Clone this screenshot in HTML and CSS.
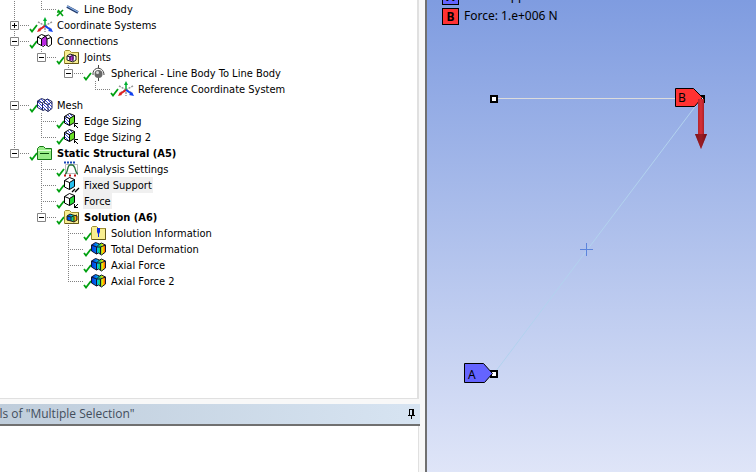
FILE: index.html
```
<!DOCTYPE html>
<html lang="en">
<head>
<meta charset="utf-8">
<title>Mechanical outline</title>
<link rel="stylesheet" href="styles.css">
</head>
<body>
<svg class="defs" aria-hidden="true">
  <defs>
    <linearGradient id="rainbow" x1="0" x2="1" y1="0" y2="0"><stop offset="0" stop-color="#0030e0"/><stop offset=".3" stop-color="#0070f0"/><stop offset=".45" stop-color="#00c8e8"/><stop offset=".6" stop-color="#20d840"/><stop offset=".8" stop-color="#ffe000"/><stop offset="1" stop-color="#ff3000"/></linearGradient>
    <pattern id="hatch" width="3" height="3" patternUnits="userSpaceOnUse"><path d="M0 0h1v1h-1zM1 1h1v1h-1zM2 2h1v1h-1z" fill="#3848e0"/></pattern>
    <symbol id="check" viewBox="0 0 9 9"><path d="M1 5l2 2.500L8 1" fill="none" stroke="#00a010" stroke-width="1.800"/></symbol>
    <symbol id="partial" viewBox="0 0 9 9"><path d="M1 8l6-6M2 2l5 6M1 4h2" fill="none" stroke="#00a010" stroke-width="1.600"/></symbol>
    <symbol id="minus" viewBox="0 0 9 9"><path d="M.5.5h8v8h-8z" fill="#fff" stroke="#848484"/><path d="M2 4.500h5" stroke="#000"/></symbol>
    <symbol id="plus" viewBox="0 0 9 9"><path d="M.5.5h8v8h-8z" fill="#fff" stroke="#848484"/><path d="M2 4.500h5M4.500 2v5" stroke="#000"/></symbol>
    <symbol id="i-line" viewBox="0 0 18 16"><path d="M4 5.500l11 6" stroke="#203868" stroke-width="2.600"/><path d="M4 5l11 6" stroke="#88b0e8" stroke-width="1.400"/></symbol>
    <symbol id="i-axes" viewBox="0 0 18 16"><path d="M2 5l13 7M16 5L3 12M9 8v7" stroke="#999" stroke-width="1.500" stroke-dasharray="2 1"/><path d="M9 9V2" stroke="#00b030" stroke-width="1.500"/><path d="M7 4l2-4 2 4z" fill="#00b030"/><path d="M9 9l-6 4" stroke="#e02020" stroke-width="2"/><path d="M9 9l6 4" stroke="#1040f0" stroke-width="2"/><path d="M1 15l2-4 2 3z" fill="#e02020"/><path d="M17 15l-5-1 3-3z" fill="#1040f0"/></symbol>
    <symbol id="i-conn" viewBox="0 0 18 16"><path d="M1.500 4l4-2.500 4 1.500 3-1 3 2.500v7l-3 2-3-2-2 2-6-3z" fill="#fff" stroke="#000"/><path d="M5 6l5-3 1 2v8l-2-1-3 1z" fill="#b828e0"/><path d="M1.500 4l4 2v7M5.500 6l4-3M11 6l4-1.500M11 6v7M11 6L9.500 3" fill="none" stroke="#000"/></symbol>
    <symbol id="folder" viewBox="0 0 18 16"><path d="M1.500 14.500v-12l1-1h4l2 2h7v11z" fill="#f8ee90" stroke="#a09030"/><path d="M2 14.500h13.500v-11" fill="none" stroke="#655818"/></symbol>
    <symbol id="i-joints" viewBox="0 0 18 16"><use href="#folder" width="18" height="16"/><path d="M4 7l3-2 3 1 3 1v4l-3 2-3-1-3-1z" fill="#fff" stroke="#222"/><path d="M6 7l4-1 1 3-1 3-4-1z" fill="#b828e0"/><path d="M4 7l3 1 3-2 3 1M7 8v4M10 7v5" fill="none" stroke="#222"/></symbol>
    <symbol id="i-sphere" viewBox="0 0 18 16"><path d="M3 10C2 1 14 1 14 10M8.500 0v3M8.500 13v3" fill="none" stroke="#444"/><circle cx="8.500" cy="9" r="4" fill="#686868"/><circle cx="7.500" cy="7.500" r="1.500" fill="#ddd"/></symbol>
    <symbol id="i-mesh" viewBox="0 0 18 16"><path d="M1.500 4l4-2.500 4 1.500 2-1 4.500 2.500v7l-4 3-3-2-2 1-5.500-3z" fill="#fff"/><path d="M1.500 4l4-2.500 4 1.500 2-1 4.500 2.500v7l-4 3-3-2-2 1-5.500-3z" fill="url(#hatch)" stroke="#20265c"/><path d="M1.500 4l5 2v7M6.500 6l3-3M8 6l4 1.500v7M12 7.500l4-3M9.500 3L8 6" fill="none" stroke="#20265c"/></symbol>
    <symbol id="i-edge" viewBox="0 0 18 16"><path d="M1.500 3.500l5-3 5 2v7l-5 3-5-2.500z" fill="#fff"/><path d="M1.500 3.500l5-3 5 2-5 3v7l-5-2.500z" fill="url(#hatch)"/><path d="M6.500 5.500l5-3v7l-5 3z" fill="#68e028"/><path d="M1.500 3.500l5-3 5 2v7l-5 3-5-2.500zl5 2 5-3M6.500 5.500v7" fill="none" stroke="#000"/><path d="M11 11l4 4M11.500 14v-3.500h3.500" fill="none" stroke="#000"/></symbol>
    <symbol id="i-static" viewBox="0 0 18 16"><path d="M1.500 14.500v-11l2-2h4l2 2h6v11z" fill="#98ec88" stroke="#167816"/><path d="M2 5.500h13" stroke="#dcffd4"/><path d="M4 8.500h9" stroke="#064806"/></symbol>
    <symbol id="i-analysis" viewBox="0 0 18 16"><path d="M2.500 3.500h12v9h-12z" fill="#fff" stroke="#bbb"/><path d="M2 13c3 0 2-9 5-9h2c4 0 3 9 6 9" fill="none" stroke="#28733c" stroke-width="1.300"/><path d="M1 1.500h12" stroke="#1848b8" stroke-width="2" stroke-dasharray="2 1"/><path d="M1 14.500h15" stroke="#c01818" stroke-width="2" stroke-dasharray="2 3"/></symbol>
    <symbol id="i-fixed" viewBox="0 0 18 16"><path d="M1.500 3.500l5-3 5 2v7l-5 3-5-2.500z" fill="#fff"/><path d="M6.500 5.500l5-3v7l-5 3z" fill="#28c0f0"/><path d="M1.500 3.500l5-3 5 2v7l-5 3-5-2.500zl5 2 5-3M6.500 5.500v7" fill="none" stroke="#000"/><path d="M9 15l3-3M12 15l4-4" stroke="#000" stroke-width="1.300"/></symbol>
    <symbol id="i-force" viewBox="0 0 18 16"><path d="M1.500 3.500l5-3 5 2v7l-5 3-5-2.500z" fill="#fff"/><path d="M6.500 5.500l5-3v7l-5 3z" fill="#28d838"/><path d="M1.500 3.500l5-3 5 2v7l-5 3-5-2.500zl5 2 5-3M6.500 5.500v7" fill="none" stroke="#000"/><path d="M15 11l-4 4M11.500 11v3.500h3.500" fill="none" stroke="#000"/></symbol>
    <symbol id="i-result" viewBox="0 0 18 16"><path d="M1.500 4l4-2.500 4 1.500 2-1 4 2v7l-4 3-3-2-2 1-5-3z" fill="url(#rainbow)" stroke="#101830"/><path d="M1.500 4l5 2v7M6.500 6l3-3M10.500 6l5-2M10.500 6v7M6.500 6l4 0" fill="none" stroke="#101830"/></symbol>
    <symbol id="i-solution" viewBox="0 0 18 16"><use href="#folder" width="18" height="16"/><path d="M4 7l3-2 3 1 4 1v4l-3 2-3-1-4-1z" fill="url(#rainbow)" stroke="#222"/><path d="M4 7l4 1 3-1 3-1M8 8v4M11 8v5" fill="none" stroke="#222"/></symbol>
    <symbol id="i-info" viewBox="0 0 18 16"><use href="#folder" width="18" height="16"/><path d="M7 3h3v4l-1 2H8L7 7z" fill="#0828e0"/><path d="M8.500 9v3" stroke="#0828e0"/></symbol>
  </defs>
</svg>
<main class="app">
  <section class="side">
    <div class="outline">
      <ul class="tree" id="tree" role="tree" aria-label="Outline"></ul>
    </div>
    <div class="details">
      <header class="details-bar">
        <h2 class="details-title">Details of "Multiple Selection"</h2>
        <button class="pin" aria-label="Pin panel"><svg viewBox="0 0 9 10"><path d="M2 .5h5M2.500 0v6M5.500 0v6M6.500 0v6M1 6.500h7M4.500 7v3" fill="none" stroke="#000"/></svg></button>
      </header>
      <div class="details-body"></div>
    </div>
  </section>
  <section class="view" aria-label="Geometry">
    <ul class="legend">
      <li class="legend-item"><span class="swatch swatch-a">A</span>Fixed Support</li>
      <li class="legend-item"><span class="swatch swatch-b">B</span>Force: 1.e+006 N</li>
    </ul>
    <svg class="scene" width="328" height="472" viewBox="-1 0 328 472">
      <defs><linearGradient id="shaft"><stop offset="0" stop-color="#901820"/><stop offset=".5" stop-color="#d83038"/><stop offset="1" stop-color="#801018"/></linearGradient></defs>
      <path d="M66 98.500h182" stroke="#dcdcdc"/>
      <path d="M68 371L272 100" stroke="#b2d2ee"/>
      <path d="M152 249.500h13M158.500 243v13" stroke="#5c84dc"/>
      <path d="M63 96h6v6h-6zM63 371h6v6h-6zM270 96h6v6h-6z" fill="#fff" stroke="#000" stroke-width="2"/>
      <path d="M36.500 363.500h19l9 10-8 9h-20z" fill="#6464ff" stroke="#000"/>
      <path d="M247.500 88.500h18l9 9-8 9h-19z" fill="#ff3232" stroke="#000"/>
      <path d="M270 99h6v35h3l-6 15-6-15h3z" fill="url(#shaft)"/>
      <path d="M267 134h12l-6 15z" fill="#701018" opacity=".6"/>
      <text class="tag" x="40" y="379">A</text>
      <text class="tag" x="250" y="102">B</text>
    </svg>
  </section>
</main>
<script src="tree.js"></script>
</body>
</html>
```
FILE: styles.css
```
* { box-sizing: border-box; }
body {
  margin: 0;
  font: 11px/18px "DejaVu Sans Condensed", "Noto Sans", sans-serif;
  color: #000;
  background: #f8f8f8;
}
ul { margin: 0; padding: 0; list-style: none; }
.defs { position: absolute; width: 0; height: 0; }
.app { display: grid; grid-template-columns: 420px 1fr; gap: 5px; height: 100vh; overflow: hidden; }
.side { display: grid; grid-template-rows: 1fr 68px; gap: 5px; min-height: 0; }
.outline { background: #fff; border-right: 2px solid #e0e0e0; border-bottom: 1px solid #e0e0e0; margin-right: 1px; padding-top: 1px; overflow: hidden; }
.row { display: flex; height: 16px; white-space: nowrap; }
.guide { width: 27px; height: 16px; flex: none; }
.joint { width: 36px; height: 16px; flex: none; overflow: visible; }
.icon { width: 18px; height: 16px; flex: none; margin-right: 2px; }
.dots { stroke: #808080; stroke-dasharray: 1 1; fill: none; }
.label { padding: 0 1px; }
.bold { font-weight: bold; }
.selected { background: #f0f0f0; }
.details { display: flex; flex-direction: column; overflow: hidden; }
.details-bar { display: flex; justify-content: space-between; align-items: center; height: 22px; flex: none; padding-right: 4px; background: linear-gradient(90deg, #bfcddb, #d7e4f2); border-bottom: 2px solid #707070; overflow: hidden; }
.details-title { margin: 0 0 0 -30px; font: 12px/18px "Open Sans", sans-serif; color: #434e5c; white-space: nowrap; }
.pin { width: 9px; height: 10px; padding: 0; border: 0; background: none; display: flex; }
.pin svg { width: 9px; height: 10px; }
.details-body { flex: 1; background: #fff; border-right: 1px solid #e0e0e0; margin-right: 1px; }
.view { position: relative; border-left: 2px solid #707070; background: linear-gradient(#7f9ce0, #dfe5f8); overflow: hidden; }
.legend { margin: -12px 0 0 15px; display: grid; gap: 3px; font: 12px/15px "Noto Sans", sans-serif; }
.legend-item { display: flex; gap: 5px; white-space: nowrap; }
.swatch { width: 17px; height: 17px; border: 1px solid #000; font-weight: bold; text-align: center; }
.swatch-a { background: #6464ff; }
.swatch-b { background: #ff3232; }
.scene { position: absolute; top: 0; left: 0; }
.tag { font: 12px "Noto Sans", sans-serif; }
```
FILE: tree.js
```
// guides: one character per ancestor level ("|" draws a line, "." leaves a gap)
// joint: "t" line continues below, "l" last child
const rows = [
  ["|", "l", "", "line", "Line Body", "", "partial"],
  ["", "t", "plus", "axes", "Coordinate Systems"],
  ["", "t", "minus", "conn", "Connections"],
  ["|", "l", "minus", "joints", "Joints"],
  ["|.", "l", "minus", "sphere", "Spherical - Line Body To Line Body"],
  ["|..", "l", "", "axes", "Reference Coordinate System"],
  ["", "t", "minus", "mesh", "Mesh"],
  ["|", "t", "", "edge", "Edge Sizing"],
  ["|", "l", "", "edge", "Edge Sizing 2"],
  ["", "l", "minus", "static", "Static Structural (A5)", "bold"],
  [".", "t", "", "analysis", "Analysis Settings"],
  [".", "t", "", "fixed", "Fixed Support", "selected"],
  [".", "t", "", "force", "Force", "selected"],
  [".", "l", "minus", "solution", "Solution (A6)", "bold"],
  ["..", "t", "", "info", "Solution Information"],
  ["..", "t", "", "result", "Total Deformation"],
  ["..", "t", "", "result", "Axial Force"],
  ["..", "l", "", "result", "Axial Force 2"]
];
document.getElementById("tree").innerHTML = rows.map(([guides, joint, box, icon, label, style = "", mark = "check"]) => {
  const lines = [...guides].map(g => `<svg class="guide">${g === "|" ? '<path class="dots" d="M14.500 0v16"/>' : ""}</svg>`).join("");
  const stem = joint === "t" ? 16 : 8;
  const toggle = box ? `<use href="#${box}" x="10" y="4" width="9" height="9"/>` : "";
  const tick = `<use href="#${mark}" x="29" y="7" width="9" height="9"/>`;
  return `<li class="row" role="treeitem" aria-level="${guides.length + 1}">${lines}<svg class="joint"><path class="dots" d="M14.500 0v${stem}M14 8.500h15"/>${toggle}${tick}</svg><svg class="icon"><use href="#i-${icon}" width="18" height="16"/></svg><span class="label ${style}">${label}</span></li>`;
}).join("");
```
